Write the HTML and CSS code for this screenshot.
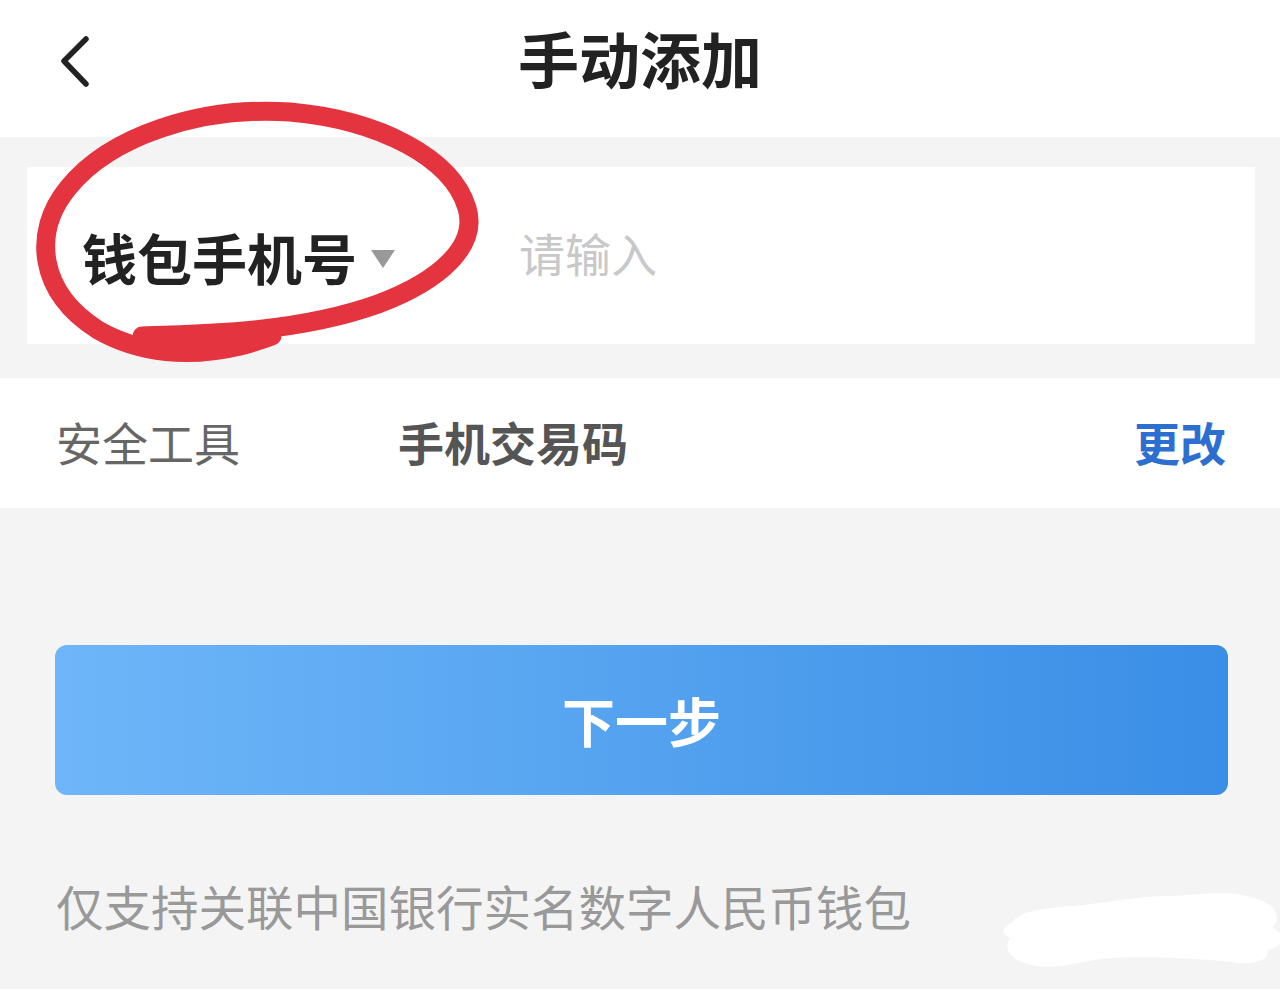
FILE: index.html
```html
<!DOCTYPE html>
<html lang="zh-CN">
<head>
  <meta charset="UTF-8">
  <title>手动添加</title>
  <link rel="stylesheet" href="styles.css">
</head>
<body>
  <header class="nav">
    <button class="nav-back" aria-label="返回">
      <svg width="34" height="56" viewBox="0 0 34 56">
        <path d="M28 4 L6 26 L28 49" fill="none" stroke="#222" stroke-width="5.5" stroke-linecap="round" stroke-linejoin="round"/>
      </svg>
    </button>
    <h1 class="nav-title">手动添加</h1>
    <span></span>
  </header>

  <section class="form-band">
    <div class="input-card">
      <div class="select">
        <span class="select-label">钱包手机号</span>
        <span class="select-caret"></span>
      </div>
      <input class="input" type="text" placeholder="请输入">
    </div>
  </section>

  <div class="tool-row">
    <span class="tool-label">安全工具</span>
    <span class="tool-value">手机交易码</span>
    <a class="tool-change" href="#">更改</a>
  </div>

  <button class="btn-next">下一步</button>

  <p class="note">仅支持关联中国银行实名数字人民币钱包</p>

  <!-- 标注：红圈 -->
  <svg class="mark-circle" width="500" height="290" viewBox="0 0 500 290">
    <path d="M142 236 C 210 234, 300 232, 378 204 C 442 180, 478 145, 467 108 C 452 58, 380 20, 290 12 C 200 6, 110 36, 68 88 C 32 132, 38 192, 98 230 C 140 254, 190 258, 240 246 C 256 242, 266 238, 272 236"
      fill="none" stroke="#e3343f" stroke-width="19" stroke-linecap="round"/>
  </svg>

  <!-- 涂抹遮挡 -->
  <svg class="mark-blob" width="290" height="84" viewBox="0 0 290 84">
    <path d="M20 35 C 25 25, 45 20, 80 18 C 110 16, 140 8, 180 8 C 210 6, 240 2, 262 10 C 285 16, 290 30, 280 40 C 295 45, 292 60, 275 62 C 280 72, 260 78, 240 74 C 200 70, 150 68, 120 70 C 90 72, 70 82, 45 78 C 20 74, 10 62, 18 50 C 8 45, 10 38, 20 35 Z" fill="#fff"/>
  </svg>
</body>
</html>
```

FILE: styles.css
```css
body {
  margin: 0;
  background-color: #f4f4f4;
  font-family: "Noto Sans CJK SC", "Noto Sans", sans-serif;
  color: #222;
  position: relative;
  min-height: 989px;
  overflow: hidden;
}

.nav {
  height: 137px;
  background-color: #fff;
  display: grid;
  grid-template-columns: 1fr auto 1fr;
  align-items: center;
}

.nav-back {
  justify-self: start;
  margin-left: 58px;
  margin-top: -12px;
  padding: 0;
  border: none;
  background: none;
  display: flex;
}

.nav-title {
  margin: -22px 0 0;
  font-size: 61px;
  font-weight: 700;
  color: #222;
}

.form-band {
  padding: 30px 25px 34px 27px;
}

.input-card {
  height: 177px;
  background-color: #fff;
  display: flex;
  align-items: center;
}

.select {
  display: flex;
  align-items: center;
  width: 490px;
  padding-left: 55px;
  box-sizing: border-box;
}

.select-label {
  font-size: 55px;
  font-weight: 700;
  color: #222;
}

.select-caret {
  margin-left: 14px;
  margin-top: 6px;
  width: 0;
  height: 0;
  border-left: 12px solid transparent;
  border-right: 12px solid transparent;
  border-top: 18px solid #999;
}

.input {
  flex: 1;
  border: none;
  outline: none;
  background: none;
  font-family: inherit;
  font-size: 46px;
  color: #222;
  margin-top: -8px;
}

.input::placeholder {
  color: #c8c8c8;
}

.tool-row {
  height: 130px;
  background-color: #fff;
  display: flex;
  align-items: center;
  padding: 0 54px 0 56px;
  font-size: 46px;
}

.tool-label {
  width: 342px;
  color: #666;
  margin-top: -4px;
}

.tool-value {
  flex: 1;
  font-weight: 700;
  color: #555;
  margin-top: -4px;
}

.tool-change {
  font-weight: 700;
  color: #2d6fd1;
  text-decoration: none;
  margin-top: -4px;
}

.btn-next {
  display: block;
  width: calc(100% - 107px);
  height: 150px;
  margin: 137px 0 0 55px;
  border: none;
  border-radius: 12px;
  background: linear-gradient(to right, #6eb6f9, #3a8ee6);
  color: #fff;
  font-family: inherit;
  font-size: 53px;
  font-weight: 700;
}

.note {
  margin: 76px 0 0 56px;
  font-size: 47.5px;
  color: #999;
}

.mark-circle {
  position: absolute;
  left: 0;
  top: 100px;
}

.mark-blob {
  position: absolute;
  left: 992px;
  top: 888px;
}
```
